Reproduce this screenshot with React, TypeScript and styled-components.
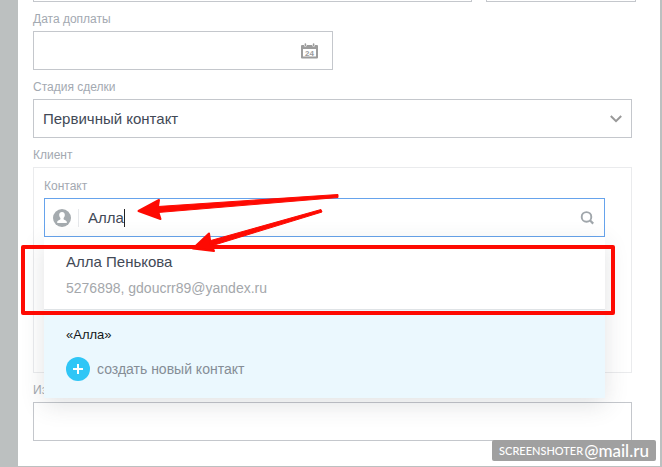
import React, { useState } from "react";
import styled, { createGlobalStyle } from "styled-components";

const Global = createGlobalStyle`
  *, *::before, *::after { box-sizing: border-box; }
  body {
    margin: 0;
    background: #bcc0c0;
    font-family: "Liberation Sans", Arial, sans-serif;
    color: #424956;
  }
  input, select, button { font-family: inherit; }
`;

const Panel = styled.main`
  position: relative;
  margin: 0 2px 1px 18px;
  padding: 0 28px 25px 15px;
  background: #fff;
`;

const TopRow = styled.div`
  display: grid;
  grid-template-columns: minmax(0, 1fr) 150px;
  grid-template-rows: 2px;
  align-items: end;
  gap: 14px;
  height: 2px;
  margin-right: -4px;
  overflow: hidden;
`;

const TextBox = styled.input`
  display: block;
  width: 100%;
  height: 39px;
  padding: 0 10px;
  border: 1px solid #c4c7cc;
  border-radius: 0;
  background: #fff;
  font-size: 15px;
  color: #424956;
  outline: none;
`;

const Label = styled.label`
  display: block;
  height: 29px;
  padding-top: 9px;
  font-size: 12px;
  line-height: 16px;
  color: #a3a9b1;
`;

const DateBox = styled.div`
  display: flex;
  align-items: center;
  width: 300px;
  max-width: 100%;
  height: 39px;
  padding-right: 14px;
  border: 1px solid #c4c7cc;
`;

const BareInput = styled.input`
  flex: 1;
  min-width: 0;
  height: 100%;
  padding: 0 10px;
  border: 0;
  background: transparent;
  font-size: 15px;
  color: #424956;
  outline: none;
`;

const IconButton = styled.button`
  display: flex;
  padding: 0;
  border: 0;
  background: transparent;
  cursor: pointer;
`;

const SelectBox = styled.div`
  display: grid;
  align-items: center;
  height: 39px;
  border: 1px solid #c4c7cc;

  > * { grid-area: 1 / 1; }
  > svg { justify-self: end; margin-right: 9px; pointer-events: none; }
`;

const Select = styled.select`
  width: 100%;
  height: 100%;
  padding: 0 32px 0 9px;
  border: 0;
  appearance: none;
  background: #fff;
  font-size: 15px;
  color: #424956;
  outline: none;
`;

const ClientBox = styled.section`
  min-height: 206px;
  padding: 1px 26px 0 10px;
  border: 1px solid #eaebed;
`;

const Combo = styled.div`
  position: relative;
`;

const SearchBox = styled.div`
  display: flex;
  align-items: center;
  height: 39px;
  padding: 0 10px 0 8px;
  border: 1px solid #66a3ec;
  background: #fff;
`;

const Separator = styled.span`
  width: 1px;
  height: 18px;
  margin: 0 9px 0 7px;
  background: #e6e8eb;
`;

const SearchInput = styled.input`
  field-sizing: content;
  min-width: 1px;
  max-width: 80%;
  padding: 0;
  border: 0;
  background: transparent;
  font-size: 15px;
  color: #424956;
  caret-color: transparent;
  outline: none;
`;

const Caret = styled.span`
  width: 1px;
  height: 18px;
  margin-right: auto;
  background: #222;
`;

const Menu = styled.div`
  position: absolute;
  z-index: 2;
  top: 100%;
  left: 0;
  right: 0;
  background: #fff;
  box-shadow: 0 7px 22px rgba(60, 66, 76, 0.15);
`;

const Option = styled.button`
  display: flex;
  flex-direction: column;
  justify-content: flex-start;
  gap: 4px;
  width: 100%;
  height: 73px;
  padding: 14px 22px 0;
  border: 0;
  border-bottom: 1px solid #dfe3e6;
  background: transparent;
  text-align: left;
  cursor: pointer;
`;

const OptionName = styled.span`
  font-size: 15px;
  line-height: 22px;
  color: #424956;
`;

const OptionInfo = styled.span`
  font-size: 14px;
  line-height: 22px;
  color: #a4a7ab;
`;

const CreateArea = styled.div`
  height: 88px;
  padding: 15px 22px 0;
  background: #ebf8fe;
`;

const Query = styled.div`
  font-size: 13px;
  line-height: 20px;
  color: #15181b;
`;

const CreateButton = styled.button`
  display: flex;
  align-items: center;
  gap: 7px;
  margin-top: 12px;
  padding: 0;
  border: 0;
  background: transparent;
  font-size: 14px;
  line-height: 24px;
  color: #858d96;
  cursor: pointer;
`;

const Highlight = styled.div`
  position: absolute;
  z-index: 3;
  top: 47px;
  left: -23px;
  right: -10px;
  height: 70px;
  border: 4px solid #fe0a02;
  border-radius: 2px;
  pointer-events: none;
`;

const Arrows = styled.svg`
  position: absolute;
  z-index: 4;
  top: -8px;
  left: 86px;
  pointer-events: none;
`;

const Watermark = styled.div`
  position: absolute;
  right: 4px;
  bottom: 5px;
  display: flex;
  align-items: center;
  justify-content: center;
  gap: 1px;
  width: 164px;
  height: 21px;
  border-radius: 2px;
  background: #a0a0a0;
  color: #fff;
  font-family: Lato, sans-serif;
  font-size: 11px;
  font-weight: 500;
  line-height: 20px;
`;

const MailName = styled.span`
  font-size: 17px;
  line-height: 18px;
`;

const CalendarIcon = () => (
  <svg width="17" height="16" viewBox="0 0 17 16" aria-hidden="true">
    <path
      fill="#9c9c9c"
      fillRule="evenodd"
      d="M1 2h2c0 2.400 2.800 2.400 2.800 0h5.400c0 2.400 2.800 2.400 2.800 0H16a1 1 0 0 1 1 1v11.500a1 1 0 0 1-1 1H1a1 1 0 0 1-1-1V3a1 1 0 0 1 1-1ZM2 6v7.500h13V6Z"
    />
    <path d="M4.400 1v1.600M12.600 1v1.600" stroke="#9c9c9c" strokeWidth="1.600" strokeLinecap="round" />
    <text x="8.500" y="12.500" textAnchor="middle" fontSize="8" fontWeight="700" fill="#9c9c9c" fontFamily="Liberation Sans, sans-serif">24</text>
  </svg>
);

const ChevronIcon = () => (
  <svg width="12" height="8" viewBox="0 0 12 8" aria-hidden="true">
    <path d="M.8 1 6 6.2 11.2 1" fill="none" stroke="#999" strokeWidth="2" />
  </svg>
);

const PersonIcon = () => (
  <svg width="18" height="18" viewBox="0 0 18 18" aria-hidden="true">
    <circle cx="9" cy="9" r="9" fill="#a5abaf" />
    <path
      fill="#fff"
      d="M9 3c2 0 3 1.300 2.800 3.200C11.700 7.500 11.200 8.300 10.600 9v1.200c.3.700 3.200 1.100 3.200 2.600V14H4.200v-1.200c0-1.500 2.900-1.900 3.200-2.600V9c-.6-.7-1.100-1.500-1.200-2.800C6 4.300 7 3 9 3Z"
    />
  </svg>
);

const SearchIcon = () => (
  <svg width="14" height="14" viewBox="0 0 14 14" aria-hidden="true">
    <circle cx="6.500" cy="5.900" r="4.800" fill="none" stroke="#a0a6ab" strokeWidth="1.900" />
    <path d="m9.900 9.300 3.300 3.300" stroke="#a0a6ab" strokeWidth="2.200" />
  </svg>
);

const PlusIcon = () => (
  <svg width="24" height="24" viewBox="0 0 24 24" aria-hidden="true">
    <circle cx="12" cy="12" r="12" fill="#2fc6f6" />
    <path d="M12 7v10M7 12h10" stroke="#fff" strokeWidth="2" />
  </svg>
);

export default function App() {
  const [query, setQuery] = useState("Алла");
  return (
    <>
      <Global />
      <Panel>
        <TopRow>
          <TextBox aria-label="Сумма" />
          <TextBox aria-label="Валюта" />
        </TopRow>

        <Label htmlFor="pay-date">Дата доплаты</Label>
        <DateBox>
          <BareInput id="pay-date" />
          <IconButton type="button" aria-label="Календарь">
            <CalendarIcon />
          </IconButton>
        </DateBox>

        <Label htmlFor="stage">Стадия сделки</Label>
        <SelectBox>
          <Select id="stage" defaultValue="first">
            <option value="first">Первичный контакт</option>
          </Select>
          <ChevronIcon />
        </SelectBox>

        <Label as="div">Клиент</Label>
        <ClientBox aria-label="Клиент">
          <Label htmlFor="contact">Контакт</Label>
          <Combo>
            <SearchBox>
              <PersonIcon />
              <Separator />
              <SearchInput id="contact" size={4} value={query} onChange={(e) => setQuery(e.target.value)} />
              <Caret />
              <IconButton type="button" aria-label="Найти">
                <SearchIcon />
              </IconButton>
            </SearchBox>
            <Menu>
              <Option type="button">
                <OptionName>Алла Пенькова</OptionName>
                <OptionInfo>5276898, gdoucrr89@yandex.ru</OptionInfo>
              </Option>
              <CreateArea>
                <Query>«{query}»</Query>
                <CreateButton type="button">
                  <PlusIcon />
                  создать новый контакт
                </CreateButton>
              </CreateArea>
            </Menu>
            <Highlight />
            <Arrows width="220" height="72" viewBox="130 190 220 72" aria-hidden="true">
              <g fill="#fe0a02" stroke="#fe0a02" strokeLinejoin="round">
                <path d="M338 194.500 158 206.500V212.500L338 197.500Z" strokeWidth="1" />
                <path d="M138.500 211 159 200 157.500 209.500 160.500 219Z" strokeWidth="2" />
                <path d="M321 209.500 209 241 211 246 322 212Z" strokeWidth="1" />
                <path d="M193 248.500 209 233.500 210.500 243.500 214 251Z" strokeWidth="2" />
              </g>
            </Arrows>
          </Combo>
        </ClientBox>

        <Label htmlFor="source">Из</Label>
        <TextBox id="source" />
        <Watermark>
          SCREENSHOTER<MailName>@mail.ru</MailName>
        </Watermark>
      </Panel>
    </>
  );
}
